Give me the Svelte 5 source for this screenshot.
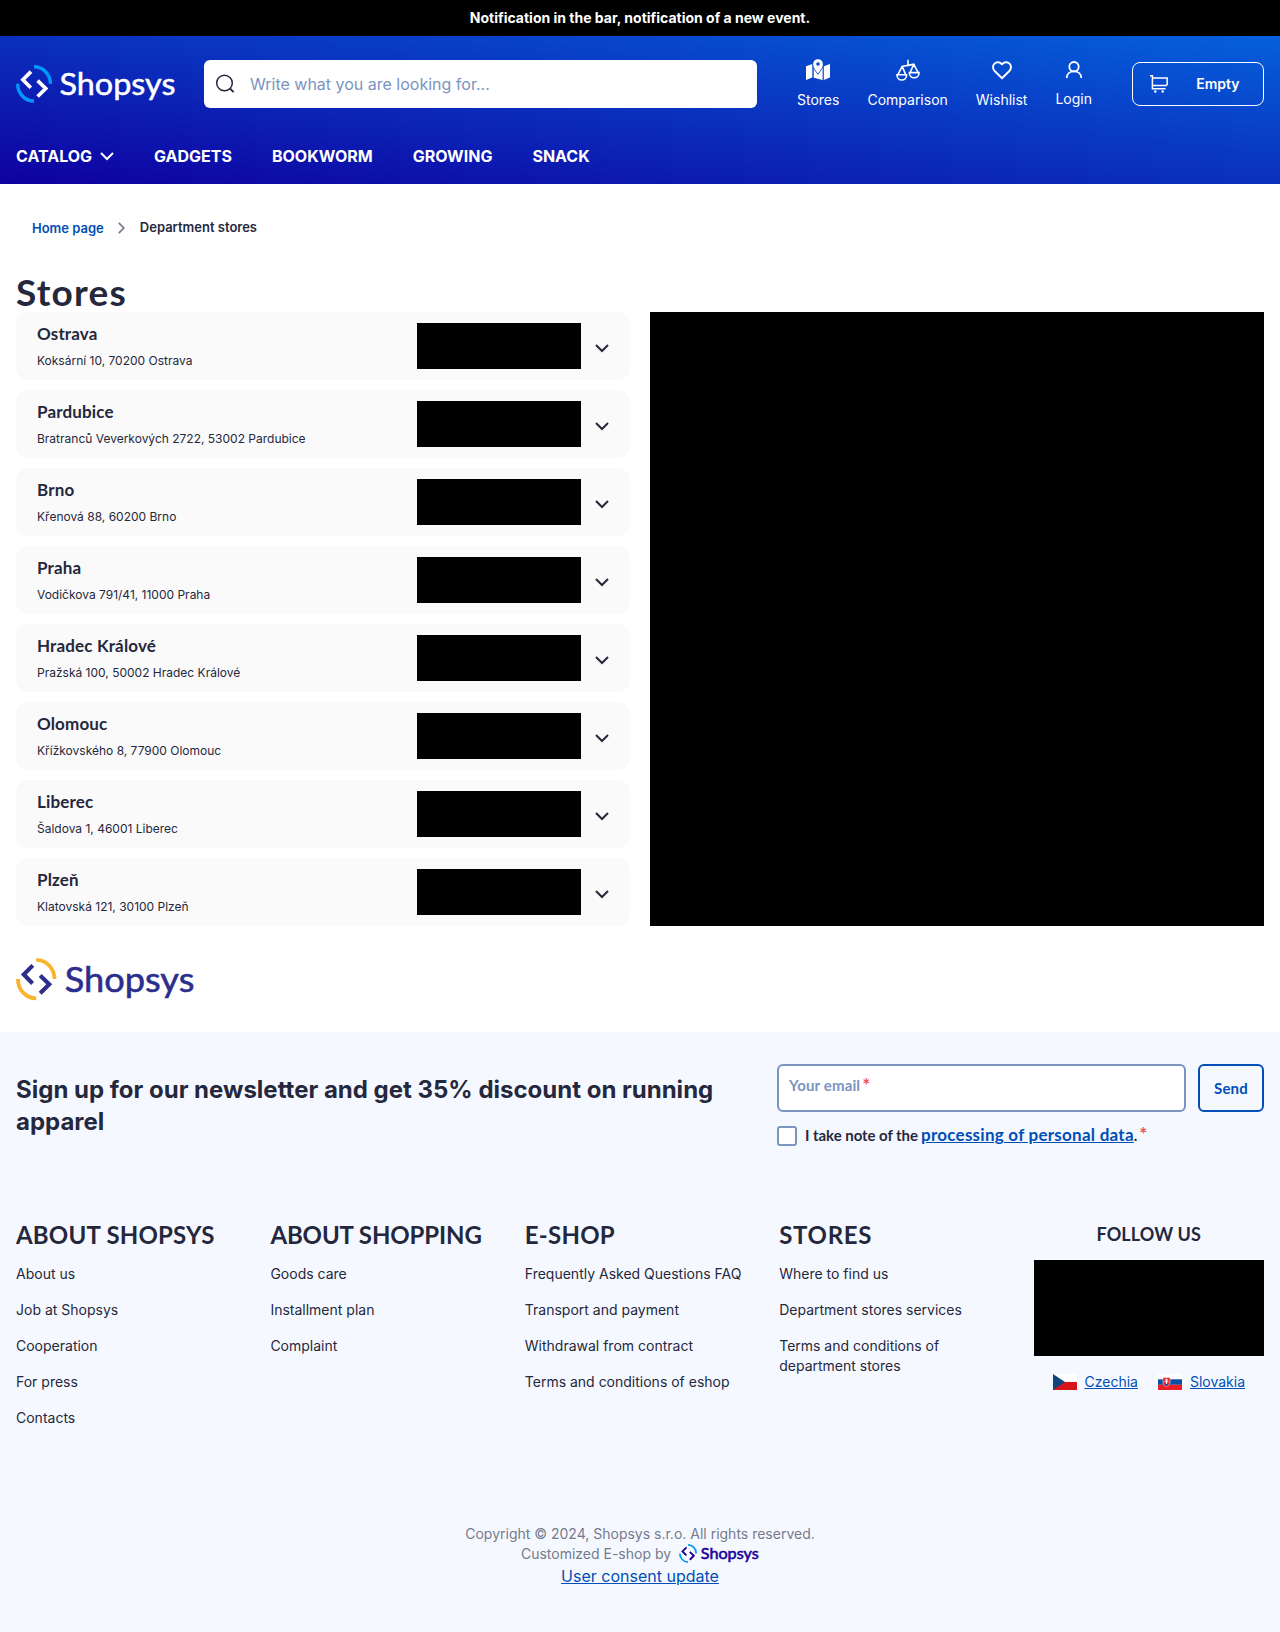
<script>
  const nav = ['GADGETS', 'BOOKWORM', 'GROWING', 'SNACK'];
  const stores = [
    { name: 'Ostrava', address: 'Koksární 10, 70200 Ostrava' },
    { name: 'Pardubice', address: 'Bratranců Veverkových 2722, 53002 Pardubice' },
    { name: 'Brno', address: 'Křenová 88, 60200 Brno' },
    { name: 'Praha', address: 'Vodičkova 791/41, 11000 Praha' },
    { name: 'Hradec Králové', address: 'Pražská 100, 50002 Hradec Králové' },
    { name: 'Olomouc', address: 'Křížkovského 8, 77900 Olomouc' },
    { name: 'Liberec', address: 'Šaldova 1, 46001 Liberec' },
    { name: 'Plzeň', address: 'Klatovská 121, 30100 Plzeň' }
  ];
  const columns = [
    { title: 'ABOUT SHOPSYS', key: 'about', links: ['About us', 'Job at Shopsys', 'Cooperation', 'For press', 'Contacts'] },
    { title: 'ABOUT SHOPPING', key: 'shopping', links: ['Goods care', 'Installment plan', 'Complaint'] },
    { title: 'E-SHOP', key: 'eshop', links: ['Frequently Asked Questions FAQ', 'Transport and payment', 'Withdrawal from contract', 'Terms and conditions of eshop'] },
    { title: 'STORES', key: 'stores', links: ['Where to find us', 'Department stores services', 'Terms and conditions of department stores'] }
  ];
</script>

{#snippet logo(kind)}
  <svg class="logo {kind}" viewBox="0 0 160 38" role="img" aria-label="Shopsys">
    <g class="arc" fill="none" stroke-width="3.4">
      <path d="M18 1.7A16.4 17 0 0 1 34.4 18.8" />
      <path d="M1.7 18.8A16.4 17 0 0 0 18 36.1" />
    </g>
    <g class="mark" fill="none" stroke-width="3.7">
      <path d="M15 6.6 6.9 14.8 14.8 22.8" />
      <path d="M21.6 15.6 29.7 23.5 21.6 31.5" />
    </g>
    <text class="word" x="43.5" y="30" textLength="116" lengthAdjust="spacingAndGlyphs">Shopsys</text>
  </svg>
{/snippet}

{#snippet chevron()}
  <svg class="chevron" width="14" height="9" viewBox="0 0 14 9"><path d="M1 1 7 7 13 1" fill="none" stroke="currentColor" stroke-width="2" /></svg>
{/snippet}

<div class="page">
  <div class="notice">Notification in the bar, notification of a new event.</div>

  <header>
    <div class="top">
      {@render logo('light')}
      <div class="search">
        <svg width="20" height="20" viewBox="0 0 20 20" fill="none" stroke="#25283d" stroke-width="1.5"><circle cx="9.500" cy="9" r="7.800" /><path d="m15 14.500 3.600 3.600" stroke-width="1.8" /></svg>
        <span>Write what you are looking for...</span>
      </div>
      <div class="actions">
        <a class="act" href="#stores">
          <svg width="24" height="24" viewBox="0 0 24 24" fill="#fff">
            <path d="M0 8.2 6.3 6v13.6L0 22z" />
            <path d="M24 6v13.4l-6.2 2.5V8.2z" />
            <path d="M7.7 8.6 12 14.8l4.6-6.2v13.3l-8.9-2.2z" />
            <path d="M12 16.200C9.200 12.700 7 8.900 7 6.200a5 5 0 0 1 10 0c0 2.700-2.200 6.500-5 10z" stroke="#084bd0" stroke-width="1" />
            <path d="M12 15.200C9.400 12 7.200 8.700 7.200 6a4.800 4.800 0 0 1 9.600 0c0 2.700-2.200 6-4.800 9.200z" />
            <circle cx="12" cy="6" r="1.800" fill="#084bd0" />
          </svg>
          <span>Stores</span>
        </a>
        <a class="act" href="#comparison">
          <svg width="24" height="24" viewBox="0 0 24 24" fill="none" stroke="#fff" stroke-width="1.600">
            <path d="M12 1.700v5.800M5.500 8.500 12 7.400l6.500-1.300" />
            <path d="M6.200 8.400 1.600 17.100M6.200 8.400l3.700 8.700M1 16.800h9.600v.4a4.800 4.800 0 0 1-9.600 0z" />
            <path d="m17.700 6.300-3.600 8.500M17.700 6.300l4.700 8.500M13.400 14.600H23v.4a4.800 4.800 0 0 1-9.600 0z" />
          </svg>
          <span>Comparison</span>
        </a>
        <a class="act" href="#wishlist">
          <svg width="24" height="24" viewBox="0 0 24 24" fill="none" stroke="#fff" stroke-width="1.900" stroke-linejoin="round"><path d="m12 20.300-7.100-7C2.500 10.800 2.400 7.600 4.500 5.600s5.600-1.700 7.500.7c1.900-2.400 5.400-2.700 7.500-.7s2 5.200-.4 7.700z" /></svg>
          <span>Wishlist</span>
        </a>
        <a class="act login" href="#login">
          <svg width="18" height="24" viewBox="0 0 18 24" fill="none" stroke="#fff" stroke-width="1.800"><circle cx="9" cy="9.700" r="4.700" /><path d="M1.700 21c0-4.200 3.100-6.600 7.300-6.600s7.300 2.400 7.300 6.600" /></svg>
          <span>Login</span>
        </a>
      </div>
      <a class="cart" href="#cart">
        <svg width="18" height="18" viewBox="0 0 18 18" fill="none" stroke="#fff" stroke-width="1.500">
          <path d="M0 .8h2.400v13h13.200M2.400 3h14.800v6.500l-1 1H2.600" />
          <circle cx="5.300" cy="16.500" r="1.200" fill="#fff" stroke="none" /><circle cx="12.700" cy="16.500" r="1.200" fill="#fff" stroke="none" />
        </svg>
        <span>Empty</span>
      </a>
    </div>
    <nav>
      <a href="#catalog">CATALOG {@render chevron()}</a>
      {#each nav as item}<a href="#nav">{item}</a>{/each}
    </nav>
  </header>

  <div class="crumbs">
    <a href="#home">Home page</a>
    <svg width="7" height="12" viewBox="0 0 7 12"><path d="m.8.800 5 5.200-5 5.200" fill="none" stroke="#7a7f8f" stroke-width="1.800" /></svg>
    <span>Department stores</span>
  </div>

  <main>
    <h1>Stores</h1>
    <div class="split">
      <div class="list">
        {#each stores as s}
          <div class="store">
            <div class="info"><h2>{s.name}</h2><p>{s.address}</p></div>
            <div class="hours"></div>
            {@render chevron()}
          </div>
        {/each}
      </div>
      <div class="map"></div>
    </div>
    {@render logo('brand')}
  </main>

  <footer>
    <section class="news">
      <h3>Sign up for our newsletter and get 35% discount on running apparel</h3>
      <form>
        <div class="row">
          <div class="field"><span class="ph">Your email</span> <b class="star">*</b></div>
          <button type="button">Send</button>
        </div>
        <div class="consent">
          <i class="box"></i>
          <div class="agree"><span class="note">I take note of the</span><a href="#privacy">processing of personal data</a><span>.</span><b class="star">*</b></div>
        </div>
      </form>
    </section>

    <section class="cols">
      {#each columns as c}
        <div class="col">
          <h4 class={c.key}>{c.title}</h4>
          {#each c.links as l}<a href="#link">{l}</a>{/each}
        </div>
      {/each}
      <div class="follow">
        <h5>FOLLOW US</h5>
        <div class="social"></div>
        <div class="flags">
          <a href="#cz">
            <svg width="24" height="16" viewBox="0 0 24 16"><path d="M0 0h24v8H0z" fill="#fff" /><path d="M0 8h24v8H0z" fill="#d7141a" /><path d="M0 0 12 8 0 16z" fill="#11457e" /></svg>
            <span>Czechia</span>
          </a>
          <a href="#sk">
            <svg width="24" height="16" viewBox="0 0 24 16"><path d="M0 0h24v5.300H0z" fill="#fff" /><path d="M0 5.300h24v5.500H0z" fill="#0b4ea2" /><path d="M0 10.800h24V16H0z" fill="#ee1c25" /><path d="M4.900 3.600h7.200v4.600c0 2.200-1.700 3.500-3.600 4.400-1.900-.9-3.600-2.200-3.600-4.400z" fill="#ee1c25" stroke="#fff" stroke-width=".5" /><path d="M8.500 4.700v5.400M7 6h3M6.500 7.800h4" stroke="#fff" stroke-width=".9" /><path d="M6.300 10.700c.7-.9 1.400-.9 2.200-.2.800-.7 1.500-.7 2.200.2L8.500 12.100z" fill="#0b4ea2" /></svg>
            <span>Slovakia</span>
          </a>
        </div>
      </div>
    </section>

    <section class="legal">
      <div>Copyright © 2024, Shopsys s.r.o. All rights reserved.</div>
      <div class="by">Customized E-shop by {@render logo('small')}</div>
      <a href="#consent">User consent update</a>
    </section>
  </footer>
</div>

<style>
  :global(body) { margin: 0; background: #fff; }
  .page { width: 1280px; height: 1632px; display: flex; flex-direction: column; font-family: Inter, sans-serif; color: #25283d; font-size: 14px; line-height: 20px; }
  .page :global(*) { box-sizing: border-box; }
  h1, h2, h3, h4, h5, p { margin: 0; }
  a { color: inherit; text-decoration: none; }
  svg { display: block; flex: none; }

  .logo { overflow: visible; }
  .word { font-family: Lato, sans-serif; font-size: 31px; stroke-width: .5; }
  .light { width: 160px; height: 38px; }
  .light .arc { stroke: #0098ff; }
  .light .mark { stroke: #fff; }
  .light .word { fill: #fff; stroke: #fff; }
  .brand { width: 179px; height: 42.500px; margin-top: 31.500px; }
  .brand .arc { stroke: #fbb32c; }
  .brand .mark { stroke: #2c2e8c; }
  .brand .word { fill: #2c2e8c; stroke: #2c2e8c; }
  .small { width: 80px; height: 19px; }
  .small .arc { stroke: #0098ff; }
  .small .mark { stroke: #1a0099; }
  .small .word { fill: #1a0099; stroke: #1a0099; stroke-width: 1.100; }

  .notice { height: 36px; background: #000; color: #fff; font-weight: 700; text-align: center; line-height: 36px; }
  header { height: 148px; padding: 24px 16px 0; background: linear-gradient(to top right, #0f00a0, #0560dc); color: #fff; }
  .top { display: flex; align-items: center; height: 48px; }
  .search { width: 553px; height: 48px; margin-left: 28px; padding-left: 11px; display: flex; align-items: center; gap: 15px; border-radius: 6px; background: #fff; color: #7a94bf; font-size: 16px; }
  .actions { display: flex; gap: 28px; margin-left: 40px; }
  .act { display: flex; flex-direction: column; align-items: center; gap: 8px; }
  .login { margin-top: -1px; }
  .cart { width: 132px; height: 44px; margin-left: auto; padding: 0 23.500px 0 17px; display: flex; align-items: center; justify-content: space-between; border: 1px solid #fff; border-radius: 8px; font-weight: 600; }
  nav { display: flex; gap: 40px; margin-top: 38px; font-size: 16px; line-height: 20px; font-weight: 700; }
  nav a { display: flex; align-items: center; gap: 8px; }

  .crumbs { display: flex; align-items: center; gap: 14.500px; height: 20px; margin: 33px 0 0 32px; font-size: 13px; font-weight: 600; }
  .crumbs a { color: #004eb6; padding-top: 2px; }
  .crumbs svg { margin-top: 2px; }
  main { height: 795px; padding: 0 16px; }
  h1 { padding-top: 32px; height: 75px; font: 700 37px/45px Lato, sans-serif; letter-spacing: 1.200px; }
  .split { display: grid; grid-template-columns: 1fr 1fr; gap: 20px; }
  .list { display: flex; flex-direction: column; gap: 10px; }
  .store { height: 68px; padding: 0 21px; display: flex; align-items: center; background: #fafafa; border-radius: 12px; }
  .info { flex: 1; padding-top: 3px; }
  h2 { font: 700 17px/20px Lato, sans-serif; letter-spacing: .15px; }
  .info p { margin-top: 7px; font-size: 12px; line-height: 20px; }
  .hours { width: 164px; height: 46px; margin: 0 14px 0 0; background: #000; }
  .store .chevron { margin-top: 4px; }
  .map { height: 614px; background: #000; }

  footer { flex: 1; padding: 32px 16px 0; background: #f5f9ff; }
  .news { display: flex; justify-content: space-between; height: 156px; }
  h3 { width: 720px; padding-top: 10px; font-size: 24px; line-height: 32px; font-weight: 700; }
  form { width: 487px; font: 700 15px/20px Lato, sans-serif; }
  .row { display: flex; gap: 12px; }
  .field { flex: 1; height: 48px; padding: 9px 10px; display: flex; gap: 2px; background: #fff; border: 2px solid #7a94bf; border-radius: 6px; color: #7a94bf; }
  .ph { letter-spacing: .15px; }
  .star { color: #ec5353; font: 700 19px/20px Lato, sans-serif; }
  button { width: 66px; height: 48px; padding: 0 0 1px; border: 2px solid #004eb6; border-radius: 6px; background: none; color: #004eb6; font: 700 15px/20px Lato, sans-serif; letter-spacing: .2px; }
  .consent { display: flex; align-items: center; gap: 8px; margin-top: 14px; }
  .box { width: 20px; height: 20px; border: 2px solid #7a94bf; border-radius: 3px; background: #fff; }
  .agree { display: flex; align-items: baseline; height: 20px; margin-top: -2px; }
  .note { letter-spacing: -.05px; }
  .agree a { margin-left: 3px; color: #004eb6; font-size: 17px; letter-spacing: .25px; text-decoration: underline; }
  .agree .star { align-self: flex-start; margin: -1px 0 0 2px; }
  .cols { display: grid; grid-template-columns: repeat(5, 1fr); gap: 24px; height: 304px; }
  .col { display: flex; flex-direction: column; align-items: flex-start; gap: 16px; }
  h4 { height: 28px; font: 700 24px/30px Lato, sans-serif; white-space: nowrap; }
  .about { letter-spacing: .2px; }
  .shopping { letter-spacing: -.12px; }
  .eshop { letter-spacing: .25px; }
  .stores { letter-spacing: .7px; }
  .follow { display: flex; flex-direction: column; align-items: center; }
  h5 { font: 700 18px/28px Lato, sans-serif; letter-spacing: .12px; }
  .social { width: 100%; height: 96px; margin-top: 12px; background: #000; }
  .flags { display: flex; gap: 20px; margin-top: 16px; }
  .flags a { display: flex; align-items: center; gap: 8px; color: #004eb6; text-decoration: underline; }
  .legal { display: flex; flex-direction: column; align-items: center; color: #757a8c; }
  .by { display: flex; gap: 8px; }
  .legal a { color: #004eb6; font-size: 16px; line-height: 24px; text-decoration: underline; }
</style>
